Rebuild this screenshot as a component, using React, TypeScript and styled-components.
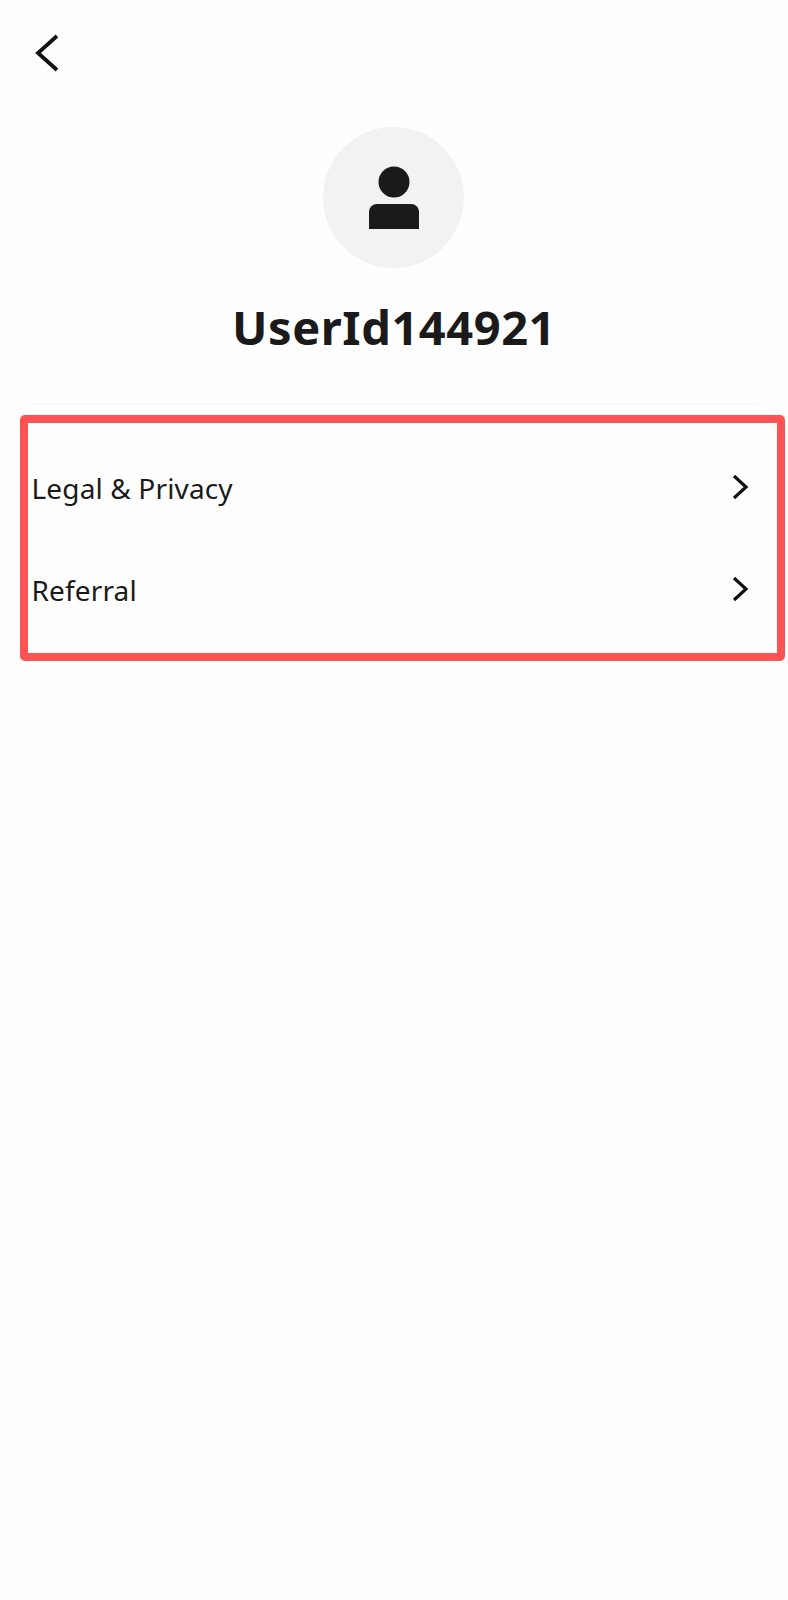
import { createGlobalStyle } from 'styled-components';
import styled from 'styled-components';

const GlobalStyle = createGlobalStyle`
  html, body {
    margin: 0;
    padding: 0;
    background: #ffffff;
  }
  * {
    box-sizing: border-box;
  }
`;

const Page = styled.div`
  display: flex;
  flex-direction: column;
  width: 788px;
  height: 1600px;
  background: #fefefe;
  color: #1a1a1a;
  font-family: 'Noto Sans', 'Open Sans', sans-serif;
  overflow: hidden;
`;

const TopBar = styled.header`
  display: flex;
  align-items: center;
  height: 127px;
  padding: 0 0 21px 34px;
`;

const BackButton = styled.button`
  display: flex;
  width: 26px;
  height: 38px;
  padding: 0;
  border: 0;
  background: none;
  color: #111111;
`;

const Profile = styled.section`
  display: flex;
  flex-direction: column;
  align-items: center;
`;

const Avatar = styled.div`
  display: flex;
  align-items: center;
  justify-content: center;
  width: 141px;
  height: 141px;
  margin-right: 1px;
  border-radius: 50%;
  background: #f2f2f2;
`;

const UserName = styled.h1`
  margin: 29px 0 0;
  font-size: 47px;
  line-height: 60px;
  font-weight: 700;
  letter-spacing: 0.55px;
  color: #1a1a1a;
`;

const Divider = styled.hr`
  width: 724px;
  height: 2px;
  margin: 46px 0 10px 32px;
  border: 0;
  background: #f8f8f8;
`;

const MenuBox = styled.nav`
  display: flex;
  flex-direction: column;
  width: 765px;
  height: 246px;
  margin-left: 20px;
  padding: 14px 0 0 3.5px;
  border: 8px solid #ff5252;
  border-radius: 5px;
`;

const MenuRow = styled.a`
  display: flex;
  align-items: center;
  justify-content: space-between;
  height: 102px;
  padding-right: 28px;
  color: #1a1a1a;
  font-size: 28px;
  letter-spacing: 0.15px;
  text-decoration: none;
`;

const Chevron = styled.svg`
  width: 18px;
  height: 26px;
  margin-top: -2px;
  color: #111111;
`;

const menuItems = ['Legal & Privacy', 'Referral'];

const App = () => {
  return (
    <Page>
      <GlobalStyle />
      <TopBar>
        <BackButton aria-label="Back">
          <svg width="26" height="38" viewBox="0 0 26 38" fill="none">
            <path d="M23 2 L4 19 L23 36" stroke="currentColor" strokeWidth="3.8" />
          </svg>
        </BackButton>
      </TopBar>

      <Profile>
        <Avatar>
          <svg width="52" height="64" viewBox="0 0 52 64" fill="#1a1a1a">
            <circle cx="26" cy="16" r="15.5" />
            <path d="M1 63 V46 a8 8 0 0 1 8 -8 H43 a8 8 0 0 1 8 8 V63 Z" />
          </svg>
        </Avatar>
        <UserName>UserId144921</UserName>
      </Profile>

      <Divider />

      <MenuBox>
        {menuItems.map((item) => (
          <MenuRow key={item}>
            {item}
            <Chevron viewBox="0 0 18 26" fill="none">
              <path d="M3 2 L15 13 L3 24" stroke="currentColor" strokeWidth="3.2" />
            </Chevron>
          </MenuRow>
        ))}
      </MenuBox>
    </Page>
  );
};

export default App;
